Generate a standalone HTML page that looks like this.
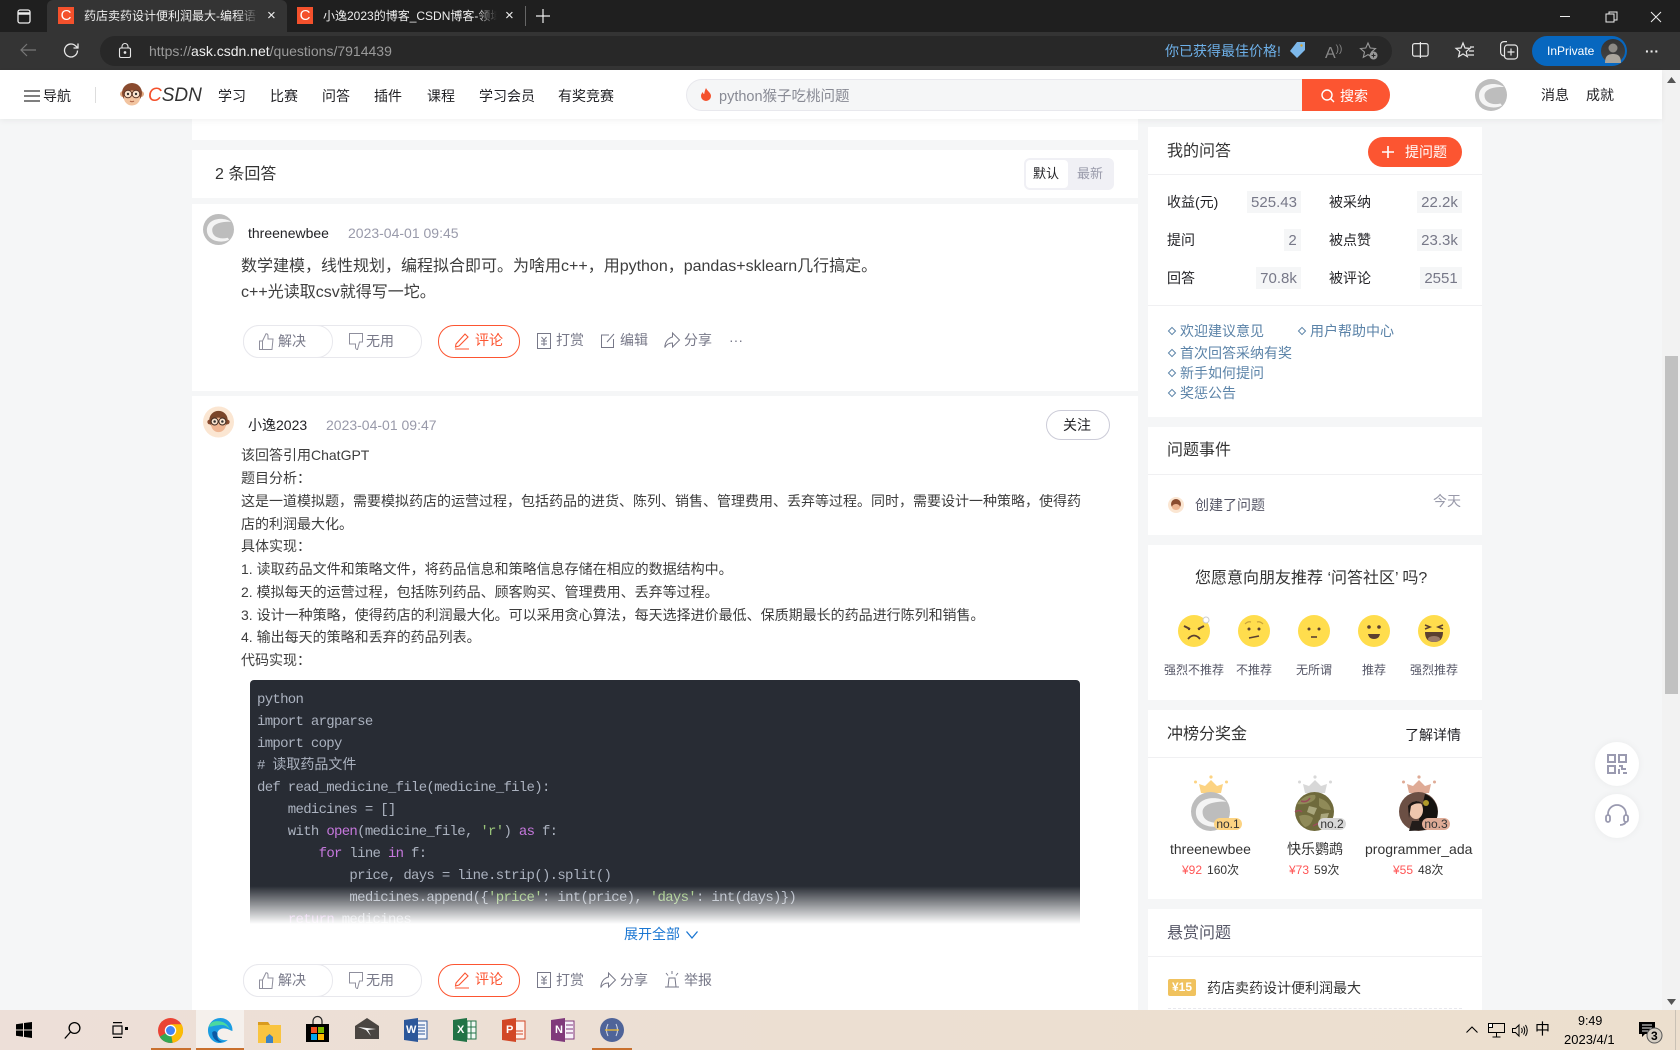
<!DOCTYPE html>
<html lang="zh"><head><meta charset="utf-8"><title>CSDN问答</title>
<style>
*{box-sizing:border-box;margin:0;padding:0}
html,body{width:1680px;height:1050px;overflow:hidden;background:#f5f6f7}
body{position:relative;font-family:"Liberation Sans","Noto Sans CJK SC",sans-serif;font-size:14px;color:#222226}
.a{position:absolute}
.t{position:absolute;white-space:nowrap;line-height:20px;height:20px}
svg{position:absolute;display:block;overflow:visible}
.card{position:absolute;background:#fff}
.ln{position:absolute;height:1px;background:#f0f0f2}
.s16{font-size:16px}.s12{font-size:12px}
.body{color:#3d3d3d}
.g{color:#999aaa}
.val{position:absolute;height:22px;line-height:24px;background:#f5f6f7;color:#777888;font-size:15px;text-align:center}
.lk{color:#5b83a8}
.dm{position:absolute;width:6px;height:6px;border:1px solid #5b83a8;transform:rotate(45deg)}
.act{color:#777888}
.pill{position:absolute;border:1px solid #e8e8ed;border-radius:16px;background:#fff}
.code{position:absolute;left:250px;top:680px;width:830px;height:244px;background:#282c34;border-radius:4px 4px 0 0;overflow:hidden}
.code pre{position:absolute;left:7px;top:9px;font:14px/22px "Liberation Mono","Noto Sans CJK SC",monospace;letter-spacing:-.7px;color:#abb2bf;white-space:pre}
.code b{font-weight:400;color:#c678dd}.code i{font-style:normal;color:#98c379}.code u{text-decoration:none;letter-spacing:0}
.fade{position:absolute;left:0;right:0;bottom:0;height:38px;background:linear-gradient(rgba(255,255,255,0),#fff)}
.tab{position:absolute;top:0;height:32px}
.fav{position:absolute;top:7px;width:16px;height:17px;background:#f4512c;color:#fff;font-size:15px;line-height:17px;text-align:center}
.ttl{position:absolute;top:7px;width:174px;height:18px;line-height:18px;font-size:12px;color:#eee;overflow:hidden;white-space:nowrap;-webkit-mask-image:linear-gradient(90deg,#000 88%,transparent)}
.circle{position:absolute;width:44px;height:44px;border-radius:50%;background:#fff;box-shadow:0 0 8px rgba(0,0,0,.05)}
.no{position:absolute;width:28px;height:12px;border-radius:6px;font-size:12px;line-height:12px;text-align:center;color:#333}
.tb{position:absolute;top:1010px}
</style></head><body>

<!-- browser chrome -->
<div class="a" style="left:0;top:0;width:1680px;height:32px;background:#1f1f1f"></div>
<div class="a" style="left:0;top:32px;width:1680px;height:38px;background:#343434"></div>
<div class="a" style="left:47px;top:0;width:240px;height:32px;background:#343434;border-radius:6px 6px 0 0"></div>
<svg style="left:16px;top:8px" width="16" height="16" viewBox="0 0 16 16" fill="none" stroke="#eee" stroke-width="1.3"><rect x="2" y="2" width="12" height="13" rx="2"/><path d="M2 5.5h12" stroke-width="2.5"/></svg>
<div class="fav" style="left:58px">C</div><div class="ttl" style="left:84px">药店卖药设计便利润最大-编程语言</div>
<div class="t s12" style="left:267px;top:6px;color:#eee;font-size:15px">×</div>
<div class="fav" style="left:297px">C</div><div class="ttl" style="left:323px">小逸2023的博客_CSDN博客-领域博主</div>
<div class="t" style="left:505px;top:6px;color:#eee;font-size:15px">×</div>
<div class="a" style="left:525px;top:6px;width:1px;height:20px;background:#666"></div>
<svg style="left:536px;top:9px" width="14" height="14" fill="none" stroke="#eee" stroke-width="1.2"><path d="M7 0v14M0 7h14"/></svg>
<svg style="left:1560px;top:11px" width="102" height="12" fill="none" stroke="#eee" stroke-width="1"><path d="M0 5.5h10M46 3h8v8h-8zM49 3V1h8v8h-3M91 1l10 10M101 1L91 11"/></svg>

<div class="a" style="left:100px;top:36px;width:1292px;height:30px;background:#282828;border-radius:15px"></div>
<svg style="left:20px;top:43px" width="16" height="14" fill="none" stroke="#777" stroke-width="1.2"><path d="M16 7H1M7 1L1 7l6 6"/></svg>
<svg style="left:63px;top:42px" width="17" height="17" viewBox="0 0 17 17" fill="none" stroke="#e6e6e6" stroke-width="1.3"><path d="M14.5 8.5a6.5 6.5 0 1 1-2-4.7L15 6M15 1.5V6h-4.5"/></svg>
<svg style="left:119px;top:43px" width="12" height="15" fill="none" stroke="#e6e6e6" stroke-width="1.1"><rect x=".5" y="5" width="11" height="9.5" rx="1.5"/><path d="M3 5V3.5a3 3 0 0 1 6 0V5"/><circle cx="6" cy="9.5" r=".8" fill="#e6e6e6"/></svg>
<div class="t" style="left:149px;top:41px;font-size:14px;color:#9a9a9a">https://<span style="color:#efefef">ask.csdn.net</span>/questions/7914439</div>
<div class="t" style="left:1165px;top:41px;font-size:14px;color:#6eb0e8">你已获得最佳价格!</div>
<svg style="left:1288px;top:41px" width="18" height="18" viewBox="0 0 18 18"><path d="M9 1h8v8l-8 8-7-7z" fill="#7db8ea"/><circle cx="13.5" cy="4.5" r="1.2" fill="#d9a021"/></svg>
<div class="t" style="left:1325px;top:40px;color:#888;font-size:16px">A<span style="font-size:10px;vertical-align:6px">))</span></div>
<svg style="left:1360px;top:42px" width="18" height="18" viewBox="0 0 18 18" fill="none" stroke="#999" stroke-width="1.1"><path d="M8 1l2.2 5 5.3.5-4 3.6 1.2 5.2L8 12.6l-4.7 2.7 1.2-5.2-4-3.6L5.800 6z"/><circle cx="13.500" cy="13.500" r="4" fill="#999" stroke="none"/><path d="M13.500 11.500v4M11.500 13.500h4" stroke="#282828"/></svg>
<svg style="left:1412px;top:42px" width="17" height="16" fill="none" stroke="#e6e6e6" stroke-width="1.200"><rect x=".6" y="1.600" width="15.500" height="12.500" rx="2"/><path d="M8.400 0v16"/></svg>
<svg style="left:1456px;top:42px" width="18" height="17" viewBox="0 0 18 17" fill="none" stroke="#e6e6e6" stroke-width="1.200"><path d="M7 1l2 5 5 .4-3.800 3.200 1.200 5L7 12l-4.400 2.600 1.200-5L0 6.400 5 6zM14 5h4M13 9h5M12 13h6"/></svg>
<svg style="left:1500px;top:41px" width="18" height="19" viewBox="0 0 18 19" fill="none" stroke="#e6e6e6" stroke-width="1.200"><path d="M4 15c-2.500-.5-3.400-2-3.400-4V4c0-2 1.400-3.400 3.400-3.400h3M3 4.500"/><rect x="4.500" y="4" width="13" height="14" rx="3"/><path d="M11 7.500v7M7.500 11h7"/></svg>
<div class="a" style="left:1532px;top:36px;width:95px;height:30px;border-radius:15px;background:#0767bf"></div>
<div class="t" style="left:1547px;top:41px;font-size:12px;color:#fff">InPrivate</div>
<div class="a" style="left:1601px;top:39px;width:24px;height:24px;border-radius:50%;background:linear-gradient(#333,#444)"></div>
<svg style="left:1601px;top:39px" width="24" height="24"><circle cx="12" cy="9" r="4.500" fill="#8d8a85"/><path d="M4 24c0-7 3-9 8-9s8 2 8 9z" fill="#aaa59c"/></svg>
<div class="t" style="left:1645px;top:41px;color:#eee;font-size:14px;font-weight:700">···</div>

<!-- page bg + scrollbar -->
<div class="a" style="left:0;top:70px;width:1662px;height:940px;background:#f5f6f7"></div>
<div class="a" style="left:1662px;top:70px;width:18px;height:940px;background:#f2f2f2"></div>
<div class="a" style="left:1665px;top:356px;width:13px;height:338px;background:#c1c1c1"></div>
<svg style="left:1667px;top:77px" width="9" height="6"><path d="M4.500 0L9 6H0z" fill="#555"/></svg>
<svg style="left:1667px;top:999px" width="9" height="6"><path d="M4.500 6L9 0H0z" fill="#555"/></svg>

<!-- left column -->
<div class="card" style="left:192px;top:100px;width:946px;height:40px"></div>
<div class="card" style="left:192px;top:150px;width:946px;height:48px"></div>
<div class="card" style="left:192px;top:204px;width:946px;height:187px"></div>
<div class="card" style="left:192px;top:396px;width:946px;height:614px"></div>

<!-- top nav -->
<div class="a" style="left:0;top:70px;width:1662px;height:49px;background:#fff;box-shadow:0 2px 6px rgba(0,0,0,.05)"></div>
<svg style="left:24px;top:90px" width="16" height="12" stroke="#333" stroke-width="1.300"><path d="M0 1h16M0 6h16M0 11h16"/></svg>
<div class="t" style="left:43px;top:86px">导航</div>
<div class="a" style="left:95px;top:87px;width:1px;height:16px;background:#ddd"></div>
<svg style="left:120px;top:83px" width="24" height="23" viewBox="0 0 24 23"><circle cx="3" cy="11" r="3" fill="#e0a982"/><circle cx="21" cy="11" r="3" fill="#e0a982"/><circle cx="12" cy="10" r="10" fill="#8a4b2f"/><ellipse cx="12" cy="15" rx="8" ry="7.500" fill="#f2c4a0"/><circle cx="8" cy="11" r="3.800" fill="#fbe5d0" stroke="#5b3526"/><circle cx="16" cy="11" r="3.800" fill="#fbe5d0" stroke="#5b3526"/><circle cx="8" cy="11" r="1.200" fill="#333"/><circle cx="16" cy="11" r="1.200" fill="#333"/><path d="M10 18q2 1.500 4 0" stroke="#a85b40" fill="none"/></svg>
<div class="t" style="left:148px;top:84px;font-size:19px;height:24px;line-height:24px;font-style:italic;color:#333"><span style="color:#f4512c">C</span>SDN</div>
<div class="t" style="left:218px;top:86px">学习</div><div class="t" style="left:270px;top:86px">比赛</div><div class="t" style="left:322px;top:86px">问答</div><div class="t" style="left:374px;top:86px">插件</div><div class="t" style="left:427px;top:86px">课程</div><div class="t" style="left:479px;top:86px">学习会员</div><div class="t" style="left:558px;top:86px">有奖竞赛</div>
<div class="a" style="left:686px;top:79px;width:704px;height:32px;background:#f5f6f7;border:1px solid #e8e8ed;border-radius:16px"></div>
<div class="a" style="left:1302px;top:79px;width:88px;height:32px;background:#fc5531;border-radius:0 16px 16px 0"></div>
<svg style="left:701px;top:88px" width="10" height="13" viewBox="0 0 10 13"><path d="M5 0c1 3 5 4.500 5 8a5 5 0 0 1-10 0c0-2 1-3 2-4 0 1.500.6 2 1.200 2C3.500 4 4 2 5 0z" fill="#f4512c"/></svg>
<div class="t" style="left:719px;top:87px;color:#888a94;font-size:14.500px">python猴子吃桃问题</div>
<svg style="left:1321px;top:89px" width="14" height="14" fill="none" stroke="#fff" stroke-width="1.400"><circle cx="6" cy="6" r="5"/><path d="M9.500 9.500L13 13"/></svg>
<div class="t" style="left:1340px;top:86px;color:#fff">搜索</div>
<svg style="left:1475px;top:79px" width="32" height="32" viewBox="0 0 32 32"><circle cx="16" cy="16" r="16" fill="#bdbdbd"/><path d="M29 8C22 3 5 3.500 4 16 3.500 28 19 31 27 26.500L25.500 24.500C17 26.500 9.500 23.500 9.500 16.500 9.500 10 19 7.500 29 8z" fill="#f4f4f4"/></svg>
<div class="t" style="left:1541px;top:85px">消息</div><div class="t" style="left:1586px;top:85px">成就</div>

<!-- answers header -->
<div class="t s16" style="left:215px;top:165px;color:#333">2 条回答</div>
<div class="a" style="left:1024px;top:158px;width:90px;height:32px;border-radius:6px;background:#f0f0f5"></div>
<div class="a" style="left:1026px;top:160px;width:42px;height:28px;border-radius:4px;background:#fff"></div>
<div class="t" style="left:1033px;top:164px;font-size:13px">默认</div><div class="t g" style="left:1077px;top:164px;font-size:13px">最新</div>

<!-- answer 1 -->
<svg style="left:203px;top:214px" width="31" height="31" viewBox="0 0 32 32"><circle cx="16" cy="16" r="16" fill="#bdbdbd"/><path d="M29 8C22 3 5 3.500 4 16 3.500 28 19 31 27 26.500L25.500 24.500C17 26.500 9.500 23.500 9.500 16.500 9.500 10 19 7.500 29 8z" fill="#f4f4f4"/></svg>
<div class="t" style="left:248px;top:223px">threenewbee</div>
<div class="t g" style="left:348px;top:223px">2023-04-01 09:45</div>
<div class="t s16 body" style="left:241px;top:257px">数学建模，线性规划，编程拟合即可。为啥用c++，用python，pandas+sklearn几行搞定。</div>
<div class="t s16 body" style="left:241px;top:283px">c++光读取csv就得写一坨。</div>

<div class="pill" style="left:243px;top:325px;width:179px;height:33px;background:#fff"></div>
<div class="a" style="left:243px;top:325px;width:90px;height:33px;border:1px solid #e8e8ed;border-radius:16px;background:#fff"></div>
<svg style="left:259px;top:333px" width="15" height="17" viewBox="0 0 15 17" fill="none" stroke="#8f8f9d"><path d="M.5 8h3v8.500h-3zM3.500 8L7 .8c1.500 0 2 1 2 2.200V6h5l-1 10.500H3.500"/></svg>
<div class="t act" style="left:278px;top:331px">解决</div>
<svg style="left:349px;top:333px" width="15" height="17" viewBox="0 0 15 17" fill="none" stroke="#8f8f9d"><path d="M.5 .5h13V9h-3l-2 7.500C7 16.500 6.500 15 6.500 14v-3h-6z"/></svg>
<div class="t act" style="left:366px;top:331px">无用</div>
<div class="pill" style="left:438px;top:325px;width:82px;height:33px;border-color:#fc5531"></div>
<svg style="left:455px;top:333px" width="15" height="17" viewBox="0 0 15 17" fill="none" stroke="#fc5531" stroke-width="1.100"><path d="M1 11L10 1l3 3-9 9-3.500 1zM0 16h14"/></svg>
<div class="t" style="left:475px;top:330px;color:#fc5531">评论</div>

<svg style="left:537px;top:333px" width="14" height="16" viewBox="0 0 14 16" fill="none" stroke="#777888"><rect x=".5" y=".5" width="13" height="15"/><path d="M4.500 4L7 7l2.500-3M4 8h6M4 11h6M7 7v6"/></svg>
<div class="t act" style="left:556px;top:330px">打赏</div>
<svg style="left:601px;top:333px" width="14" height="15" viewBox="0 0 14 15" fill="none" stroke="#777888"><path d="M8 2H.5v12.500h12V6M6 9l7-8"/></svg>
<div class="t act" style="left:620px;top:330px">编辑</div>
<svg style="left:664px;top:332px" width="16" height="17" viewBox="0 0 16 17" fill="none" stroke="#777888"><path d="M8.500 1L15.500 8l-7 7v-4C4 11 2 13 .8 15.500 1 10 4 6 8.500 5z"/></svg>
<div class="t act" style="left:684px;top:330px">分享</div>
<div class="t act" style="left:729px;top:330px;font-size:14px">···</div>

<!-- answer 2 -->
<svg style="left:203px;top:406px" width="31" height="32" viewBox="0 0 32 32"><circle cx="16" cy="16" r="16" fill="#fbe6d2"/><circle cx="7" cy="16" r="2.500" fill="#8a4b2f"/><circle cx="25" cy="16" r="2.500" fill="#8a4b2f"/><circle cx="16" cy="14" r="9.500" fill="#7a4529"/><ellipse cx="16" cy="19" rx="7.500" ry="7.500" fill="#eeb592"/><circle cx="12" cy="15.500" r="3.600" fill="#fbe5d0" stroke="#3e2a20"/><circle cx="20" cy="15.500" r="3.600" fill="#fbe5d0" stroke="#3e2a20"/><circle cx="12" cy="15.500" r="1.300" fill="#333"/><circle cx="20" cy="15.500" r="1.300" fill="#333"/></svg>
<div class="t" style="left:248px;top:415px">小逸2023</div>
<div class="t g" style="left:326px;top:415px">2023-04-01 09:47</div>
<div class="pill" style="left:1046px;top:410px;width:64px;height:30px;border-color:#ccccd8"></div>
<div class="t" style="left:1063px;top:415px">关注</div>

<div class="t body" style="left:241px;top:445px">该回答引用ChatGPT</div>
<div class="t body" style="left:241px;top:468px">题目分析：</div>
<div class="t body" style="left:241px;top:491px">这是一道模拟题，需要模拟药店的运营过程，包括药品的进货、陈列、销售、管理费用、丢弃等过程。同时，需要设计一种策略，使得药</div>
<div class="t body" style="left:241px;top:514px">店的利润最大化。</div>
<div class="t body" style="left:241px;top:536px">具体实现：</div>
<div class="t body" style="left:241px;top:559px">1. 读取药品文件和策略文件，将药品信息和策略信息存储在相应的数据结构中。</div>
<div class="t body" style="left:241px;top:582px">2. 模拟每天的运营过程，包括陈列药品、顾客购买、管理费用、丢弃等过程。</div>
<div class="t body" style="left:241px;top:605px">3. 设计一种策略，使得药店的利润最大化。可以采用贪心算法，每天选择进价最低、保质期最长的药品进行陈列和销售。</div>
<div class="t body" style="left:241px;top:627px">4. 输出每天的策略和丢弃的药品列表。</div>
<div class="t body" style="left:241px;top:650px">代码实现：</div>

<div class="code"><pre>python
import argparse
import copy
# <u>读取药品文件</u>
def read_medicine_file(medicine_file):
    medicines = []
    with <b>open</b>(medicine_file, <i>'r'</i>) <b>as</b> f:
        <b>for</b> line <b>in</b> f:
            price, days = line.strip().split()
            medicines.append({<i>'price'</i>: int(price), <i>'days'</i>: int(days)})
    <b>return</b> medicines</pre><div class="fade"></div></div>

<div class="t" style="left:624px;top:924px;color:#1a76d2">展开全部</div>
<svg style="left:686px;top:931px" width="12" height="8" fill="none" stroke="#1a76d2" stroke-width="1.300"><path d="M.5 .5L6 7l5.500-6.500"/></svg>

<div class="pill" style="left:243px;top:964px;width:179px;height:33px"></div>
<div class="a" style="left:243px;top:964px;width:90px;height:33px;border:1px solid #e8e8ed;border-radius:16px;background:#fff"></div>
<svg style="left:259px;top:972px" width="15" height="17" viewBox="0 0 15 17" fill="none" stroke="#8f8f9d"><path d="M.5 8h3v8.500h-3zM3.500 8L7 .8c1.500 0 2 1 2 2.200V6h5l-1 10.500H3.500"/></svg>
<div class="t act" style="left:278px;top:970px">解决</div>
<svg style="left:349px;top:972px" width="15" height="17" viewBox="0 0 15 17" fill="none" stroke="#8f8f9d"><path d="M.5 .5h13V9h-3l-2 7.500C7 16.500 6.500 15 6.500 14v-3h-6z"/></svg>
<div class="t act" style="left:366px;top:970px">无用</div>
<div class="pill" style="left:438px;top:964px;width:82px;height:33px;border-color:#fc5531"></div>
<svg style="left:455px;top:972px" width="15" height="17" viewBox="0 0 15 17" fill="none" stroke="#fc5531" stroke-width="1.100"><path d="M1 11L10 1l3 3-9 9-3.500 1zM0 16h14"/></svg>
<div class="t" style="left:475px;top:969px;color:#fc5531">评论</div>
<svg style="left:537px;top:972px" width="14" height="16" viewBox="0 0 14 16" fill="none" stroke="#777888"><rect x=".5" y=".5" width="13" height="15"/><path d="M4.500 4L7 7l2.500-3M4 8h6M4 11h6M7 7v6"/></svg>
<div class="t act" style="left:556px;top:970px">打赏</div>
<svg style="left:600px;top:972px" width="16" height="17" viewBox="0 0 16 17" fill="none" stroke="#777888"><path d="M8.500 1L15.500 8l-7 7v-4C4 11 2 13 .8 15.500 1 10 4 6 8.500 5z"/></svg>
<div class="t act" style="left:620px;top:970px">分享</div>
<svg style="left:664px;top:971px" width="16" height="17" viewBox="0 0 16 17" fill="none" stroke="#777888"><path d="M4 16l1-9h6l1 9M1 16h14M8 0v3M2 2l2 2.500M14 2l-2 2.500"/></svg>
<div class="t act" style="left:684px;top:970px">举报</div>

<!-- sidebar card 1 -->
<div class="card" style="left:1148px;top:127px;width:334px;height:290px"></div>
<div class="t s16" style="left:1167px;top:142px;color:#333">我的问答</div>
<div class="a" style="left:1368px;top:137px;width:94px;height:30px;border-radius:15px;background:#fc5531"></div>
<svg style="left:1382px;top:146px" width="12" height="12" stroke="#fff" stroke-width="1.600"><path d="M6 0v12M0 6h12"/></svg>
<div class="t" style="left:1405px;top:142px;color:#fff">提问题</div>
<div class="ln" style="left:1148px;top:174px;width:334px"></div>
<div class="t" style="left:1167px;top:192px">收益(元)</div><div class="val" style="left:1247px;top:191px;width:54px">525.43</div>
<div class="t" style="left:1329px;top:192px">被采纳</div><div class="val" style="left:1417px;top:191px;width:45px">22.2k</div>
<div class="t" style="left:1167px;top:230px">提问</div><div class="val" style="left:1284px;top:229px;width:17px">2</div>
<div class="t" style="left:1329px;top:230px">被点赞</div><div class="val" style="left:1417px;top:229px;width:45px">23.3k</div>
<div class="t" style="left:1167px;top:268px">回答</div><div class="val" style="left:1256px;top:267px;width:45px">70.8k</div>
<div class="t" style="left:1329px;top:268px">被评论</div><div class="val" style="left:1420px;top:267px;width:42px">2551</div>
<div class="ln" style="left:1148px;top:305px;width:334px"></div>
<div class="dm" style="left:1169px;top:328px"></div><div class="t lk" style="left:1180px;top:321px">欢迎建议意见</div>
<div class="dm" style="left:1299px;top:328px"></div><div class="t lk" style="left:1310px;top:321px">用户帮助中心</div>
<div class="dm" style="left:1169px;top:350px"></div><div class="t lk" style="left:1180px;top:343px">首次回答采纳有奖</div>
<div class="dm" style="left:1169px;top:370px"></div><div class="t lk" style="left:1180px;top:363px">新手如何提问</div>
<div class="dm" style="left:1169px;top:390px"></div><div class="t lk" style="left:1180px;top:383px">奖惩公告</div>

<!-- sidebar card 2 -->
<div class="card" style="left:1148px;top:427px;width:334px;height:108px"></div>
<div class="t s16" style="left:1167px;top:441px;color:#333">问题事件</div>
<div class="ln" style="left:1148px;top:474px;width:334px"></div>
<svg style="left:1168px;top:497px" width="16" height="16" viewBox="0 0 16 16"><circle cx="8" cy="8" r="8" fill="#fbe6d2"/><circle cx="8" cy="7" r="5" fill="#8a4b2f"/><ellipse cx="8" cy="10" rx="4" ry="3" fill="#eeb592"/></svg>
<div class="t" style="left:1195px;top:495px;color:#555666">创建了问题</div>
<div class="t g" style="left:1433px;top:491px">今天</div>

<!-- sidebar card 3 -->
<div class="card" style="left:1148px;top:545px;width:334px;height:155px"></div>
<div class="t s16" style="left:1195px;top:569px;color:#333">您愿意向朋友推荐 ‘问答社区’ 吗?</div>
<svg style="left:1178px;top:615px" width="32" height="32" viewBox="0 0 32 32"><circle cx="16" cy="16" r="16" fill="#ffdd4d"/><path d="M6 11l6 3M26 11l-6 3" stroke="#5b4030" stroke-width="2"/><circle cx="11" cy="14" r="1.200" fill="#5b4030"/><circle cx="21" cy="14" r="1.200" fill="#5b4030"/><path d="M10 24q6-7 12 0" fill="none" stroke="#5b4030" stroke-width="1.800"/><circle cx="28" cy="5" r="3" fill="#fff" stroke="#ccc"/></svg>
<svg style="left:1238px;top:615px" width="32" height="32" viewBox="0 0 32 32"><circle cx="16" cy="16" r="16" fill="#ffdd4d"/><path d="M7 9q3-3 6-2M25 9q-3-3-6-2" fill="none" stroke="#c9a23a" stroke-width="1.200"/><circle cx="11" cy="14" r="1.500" fill="#5b4030"/><circle cx="21" cy="14" r="1.500" fill="#5b4030"/><path d="M11 23l10-2" stroke="#5b4030" stroke-width="1.600"/></svg>
<svg style="left:1298px;top:615px" width="32" height="32" viewBox="0 0 32 32"><circle cx="16" cy="16" r="16" fill="#ffdd4d"/><circle cx="11" cy="14" r="1.500" fill="#5b4030"/><circle cx="21" cy="14" r="1.500" fill="#5b4030"/><path d="M13 22h6" stroke="#5b4030" stroke-width="1.600"/></svg>
<svg style="left:1358px;top:615px" width="32" height="32" viewBox="0 0 32 32"><circle cx="16" cy="16" r="16" fill="#ffdd4d"/><circle cx="11" cy="12" r="1.800" fill="#5b4030"/><circle cx="21" cy="12" r="1.800" fill="#5b4030"/><path d="M10 19h12q-1 5-6 5t-6-5z" fill="#5b4030"/></svg>
<svg style="left:1418px;top:615px" width="32" height="32" viewBox="0 0 32 32"><circle cx="16" cy="16" r="16" fill="#ffdd4d"/><path d="M7 10l5 2-5 2M25 10l-5 2 5 2" fill="none" stroke="#5b4030" stroke-width="1.500"/><path d="M7 17h18q0 10-9 10T7 17z" fill="#5b4030"/><ellipse cx="16" cy="24" rx="6" ry="3" fill="#9a7a68"/></svg>
<div class="t s12" style="left:1164px;top:660px;color:#555666">强烈不推荐</div>
<div class="t s12" style="left:1236px;top:660px;color:#555666">不推荐</div>
<div class="t s12" style="left:1296px;top:660px;color:#555666">无所谓</div>
<div class="t s12" style="left:1362px;top:660px;color:#555666">推荐</div>
<div class="t s12" style="left:1410px;top:660px;color:#555666">强烈推荐</div>

<!-- sidebar card 4 -->
<div class="card" style="left:1148px;top:710px;width:334px;height:189px"></div>
<div class="t s16" style="left:1167px;top:725px;color:#333">冲榜分奖金</div>
<div class="t" style="left:1405px;top:725px">了解详情</div>
<div class="ln" style="left:1148px;top:757px;width:334px"></div>
<svg style="left:1194px;top:775px" width="34" height="18" viewBox="0 0 34 18" fill="#fcd382"><circle cx="17" cy="2" r="1.600"/><circle cx="1.500" cy="7" r="1.500"/><circle cx="32.500" cy="7" r="1.500"/><path d="M5 9l6 2 6-6 6 6 6-2-2 9H7z"/></svg>
<svg style="left:1298px;top:775px" width="34" height="18" viewBox="0 0 34 18" fill="#d8d8d8"><circle cx="17" cy="2" r="1.600"/><circle cx="1.500" cy="7" r="1.500"/><circle cx="32.500" cy="7" r="1.500"/><path d="M5 9l6 2 6-6 6 6 6-2-2 9H7z"/></svg>
<svg style="left:1402px;top:775px" width="34" height="18" viewBox="0 0 34 18" fill="#dfab96"><circle cx="17" cy="2" r="1.600"/><circle cx="1.500" cy="7" r="1.500"/><circle cx="32.500" cy="7" r="1.500"/><path d="M5 9l6 2 6-6 6 6 6-2-2 9H7z"/></svg>
<svg style="left:1191px;top:792px" width="39" height="39" viewBox="0 0 32 32"><circle cx="16" cy="16" r="16" fill="#bdbdbd"/><path d="M29 8C22 3 5 3.500 4 16 3.500 28 19 31 27 26.500L25.500 24.500C17 26.500 9.500 23.500 9.500 16.500 9.500 10 19 7.500 29 8z" fill="#f4f4f4"/></svg>
<svg style="left:1295px;top:792px" width="39" height="39" viewBox="0 0 39 39"><circle cx="19.500" cy="19.500" r="19.500" fill="#6f6a3c"/><path d="M2 12q8-10 18-9 2 4-4 7-6 3-14 2zM24 6q10 3 12 12-8 0-12-4zM4 24q8-3 14 2-2 8-8 9-5-4-6-11z" fill="#8f8a58"/><path d="M14 14l8 2-3 7-7-3zM26 22l8-1-3 9-6-2z" fill="#a9a67c"/><path d="M6 9q6 2 9-3M18 34q6-4 10-2M0 20q4-3 7 0" stroke="#9b4b5a" fill="none" stroke-width="1.500"/></svg>
<svg style="left:1399px;top:792px" width="39" height="39" viewBox="0 0 39 39"><circle cx="19.500" cy="19.500" r="19.500" fill="#6b4f44"/><path d="M26 2a19.500 19.500 0 0 1 6 33l-8 2-4-9z" fill="#151310"/><ellipse cx="17" cy="18" rx="7" ry="9" fill="#eec6ad"/><path d="M9 14q7-9 15-2-7-2-12 2l-2 12z" fill="#1d1714"/><circle cx="27" cy="11" r="3" fill="#b09a2a"/><path d="M10 39l3-10h10l5 9z" fill="#221c1a"/></svg>
<div class="no" style="left:1214px;top:818px;background:#fcd382">no.1</div>
<div class="no" style="left:1318px;top:818px;background:#d8d8d8">no.2</div>
<div class="no" style="left:1422px;top:818px;background:#dfab96">no.3</div>
<div class="t" style="left:1170px;top:839px;color:#333">threenewbee</div>
<div class="t" style="left:1287px;top:839px;color:#333">快乐鹦鹉</div>
<div class="t" style="left:1365px;top:839px;color:#333">programmer_ada</div>
<div class="t s12" style="left:1182px;top:860px;color:#f55"><span>¥92</span><span style="color:#333;margin-left:5px">160次</span></div>
<div class="t s12" style="left:1289px;top:860px;color:#f55"><span>¥73</span><span style="color:#333;margin-left:5px">59次</span></div>
<div class="t s12" style="left:1393px;top:860px;color:#f55"><span>¥55</span><span style="color:#333;margin-left:5px">48次</span></div>

<!-- sidebar card 5 -->
<div class="card" style="left:1148px;top:909px;width:334px;height:101px"></div>
<div class="t s16" style="left:1167px;top:924px;color:#555666">悬赏问题</div>
<div class="ln" style="left:1148px;top:956px;width:334px"></div>
<div class="a" style="left:1168px;top:979px;width:28px;height:17px;border-radius:2px;background:#f0c25e;color:#fff;font-size:12px;font-weight:700;line-height:17px;text-align:center">¥15</div>
<div class="t" style="left:1207px;top:978px;color:#333">药店卖药设计便利润最大</div>
<div class="a" style="left:1168px;top:1008px;width:294px;border-top:1px dashed #e8e8ed"></div>

<!-- floating -->
<div class="circle" style="left:1595px;top:742px"></div>
<div class="circle" style="left:1595px;top:794px"></div>
<svg style="left:1607px;top:754px" width="20" height="20" viewBox="0 0 20 20" fill="none" stroke="#9a9ab0" stroke-width="2"><rect x="1" y="1" width="7" height="7"/><rect x="12" y="1" width="7" height="7"/><rect x="1" y="12" width="7" height="7"/><path d="M12 12h3v3h4M12 15v5M16 19h4"/></svg>
<svg style="left:1605px;top:804px" width="24" height="24" viewBox="0 0 24 24" fill="none" stroke="#9a9ab0" stroke-width="1.800"><path d="M3 11V10a9 9 0 0 1 18 0v1M21 17c0 2.500-3 4-6 4"/><rect x="1" y="11" width="4" height="7" rx="2"/><rect x="19" y="11" width="4" height="7" rx="2"/></svg>

<!-- taskbar -->
<div class="a" style="left:0;top:1010px;width:1680px;height:40px;background:linear-gradient(90deg,#eddfd8,#ecdfd2 50%,#ecdfce)"></div>
<div class="a" style="left:196px;top:1010px;width:48px;height:40px;background:#f5f0ec"></div>
<div class="a" style="left:151px;top:1048px;width:40px;height:2px;background:#c9702e"></div>
<div class="a" style="left:196px;top:1048px;width:48px;height:2px;background:#c9702e"></div>
<div class="a" style="left:592px;top:1048px;width:40px;height:2px;background:#c9702e"></div>
<svg style="left:16px;top:1022px" width="16" height="16" fill="#000"><path d="M0 2.200L7 1.200V7.500H0zM8 1l8-1v7.500H8zM0 8.500h7v6.300l-7-1zM8 8.500h8V16l-8-1.100z"/></svg>
<svg style="left:64px;top:1022px" width="17" height="17" fill="none" stroke="#000" stroke-width="1.300"><circle cx="10.500" cy="6" r="5.400"/><path d="M6.500 10L.8 16.500"/></svg>
<svg style="left:112px;top:1022px" width="16" height="16" fill="none" stroke="#000" stroke-width="1.200"><path d="M1 .6h9M1 15.400h9"/><rect x="1" y="4" width="9" height="8"/><rect x="13" y="5" width="3" height="3" fill="#000" stroke="none"/></svg>
<svg style="left:158px;top:1018px" width="25" height="25" viewBox="0 0 24 24"><circle cx="12" cy="12" r="12" fill="#ea4335"/><path d="M12 12L1.600 18A12 12 0 0 0 14 23.800z" fill="#34a853"/><path d="M12 6h10.500A12 12 0 0 1 14 23.800L12 12z" fill="#fbbc05"/><circle cx="12" cy="12" r="5.500" fill="#fff"/><circle cx="12" cy="12" r="4.300" fill="#4285f4"/></svg>
<svg style="left:208px;top:1018px" width="25" height="25" viewBox="0 0 24 24"><path d="M12 0C5 0 0 5.500 0 12c0 7 5.500 12 11 12 3 0 6-1 8-3-4 1-10-.5-10-6 0-3 3-5 6-5 4 0 6 2 8.500 2.500C24 6 19 0 12 0z" fill="#1b9de2"/><path d="M1 8c1-4 5-5 8-5 6 0 10 3 12 8-3-4-7-5-11-4-4 0-7 2-9 1z" fill="#4bd9a0"/><path d="M4 14c0 6 5 10 11 9-4 0-7-3-6-8-1-3-4-3-5-1z" fill="#0c59a4"/></svg>
<svg style="left:258px;top:1022px" width="23" height="21" viewBox="0 0 23 21"><path d="M0 0h10l2 3h11v18H0z" fill="#f9c440"/><path d="M0 0h10l2 3H0z" fill="#d99b1f"/><path d="M8 15l3.500-3 3.500 3v6H8z" fill="#3b82c4"/></svg>
<svg style="left:306px;top:1018px" width="23" height="24" viewBox="0 0 23 24"><path d="M7 6V3a4.500 4.500 0 0 1 9 0v3" fill="none" stroke="#222" stroke-width="1.200"/><rect y="6" width="23" height="18" fill="#000"/><rect x="5" y="9" width="6" height="6" fill="#f25022"/><rect x="12" y="9" width="6" height="6" fill="#7fba00"/><rect x="5" y="16" width="6" height="6" fill="#00a4ef"/><rect x="12" y="16" width="6" height="6" fill="#ffb900"/></svg>
<svg style="left:355px;top:1018px" width="24" height="21" viewBox="0 0 24 21"><path d="M0 8L12 0l12 8v13H0z" fill="#4a4541"/><path d="M3 9l18 2-8 1 3 6-5-6z" fill="#f5f5f5"/></svg>
<svg style="left:404px;top:1018px" width="23" height="24" viewBox="0 0 23 24"><rect x="9" y="3" width="14" height="18" fill="#f4f6fb" stroke="#2b579a"/><path d="M13 7h8M13 10h8M13 13h8M13 16h8" stroke="#2b579a"/><path d="M0 2L14 0v24L0 22z" fill="#2b579a"/></svg><div class="t" style="left:406px;top:1020px;color:#fff;font-size:11px;font-weight:700">W</div>
<svg style="left:453px;top:1018px" width="23" height="24" viewBox="0 0 23 24"><rect x="9" y="3" width="14" height="18" fill="#f3faf5" stroke="#217346"/><path d="M14 3v18M18 3v18M9 9h14M9 15h14" stroke="#217346"/><path d="M0 2L14 0v24L0 22z" fill="#217346"/></svg><div class="t" style="left:457px;top:1020px;color:#fff;font-size:11px;font-weight:700">X</div>
<svg style="left:502px;top:1018px" width="23" height="24" viewBox="0 0 23 24"><rect x="9" y="3" width="14" height="18" fill="#fdf1ec" stroke="#d24726"/><path d="M14 13h7M14 16h7" stroke="#d24726"/><path d="M0 2L14 0v24L0 22z" fill="#d24726"/></svg><div class="t" style="left:506px;top:1020px;color:#fff;font-size:11px;font-weight:700">P</div>
<svg style="left:551px;top:1018px" width="23" height="24" viewBox="0 0 23 24"><rect x="9" y="3" width="14" height="18" fill="#f7f0f9" stroke="#80397b"/><path d="M15 7h7M15 11h7M15 15h7" stroke="#80397b"/><path d="M0 2L14 0v24L0 22z" fill="#80397b"/></svg><div class="t" style="left:555px;top:1020px;color:#fff;font-size:11px;font-weight:700">N</div>
<svg style="left:600px;top:1018px" width="24" height="24" viewBox="0 0 24 24"><circle cx="12" cy="12" r="12" fill="#4f6499"/><path d="M8 6q-3 6 0 12M16 6q3 6 0 12" fill="none" stroke="#d7dcea"/><path d="M5 12h14" stroke="#e5b83a" stroke-width="1.400"/></svg>

<svg style="left:1466px;top:1026px" width="12" height="7" fill="none" stroke="#000" stroke-width="1.100"><path d="M.5 6.500L6 1l5.500 5.500"/></svg>
<svg style="left:1488px;top:1023px" width="17" height="15" fill="none" stroke="#000"><path d="M5 .5h11.500v9H.5v-5M8.500 9.500v4M4.500 14h8"/><rect x=".5" y=".5" width="4" height="4" fill="#fff"/></svg>
<svg style="left:1512px;top:1024px" width="16" height="13" fill="none" stroke="#000"><path d="M.5 4.500h3L7 1v11L3.500 8.500h-3zM9.500 4q1.500 2.500 0 5M11.500 2.500q2.500 4 0 8M13.500 1q3.500 5.500 0 11"/></svg>
<div class="t" style="left:1535px;top:1020px;font-size:15px;color:#000">中</div>
<div class="t" style="left:1578px;top:1011px;font-size:12.500px;color:#000">9:49</div>
<div class="t" style="left:1564px;top:1030px;font-size:13px;color:#000">2023/4/1</div>
<svg style="left:1639px;top:1022px" width="24" height="22" viewBox="0 0 24 22"><path d="M0 0h16v12H6l-3 3v-3H0z" fill="#000"/><path d="M3 3h10M3 6h10M3 9h7" stroke="#eee"/><circle cx="15.500" cy="13.500" r="7.500" fill="#d4cdc2" stroke="#555"/></svg>
<div class="t s12" style="left:1651px;top:1026px;font-weight:700;color:#000">3</div>
<div class="a" style="left:1675px;top:1010px;width:1px;height:40px;background:#c9c1b5"></div>
</body></html>
